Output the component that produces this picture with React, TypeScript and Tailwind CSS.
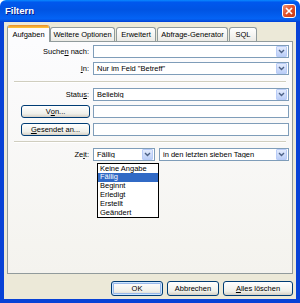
import React from "react";

const Arrow = () => (
  <div className="w-[11px] h-[11px] mr-px flex items-center justify-center rounded-[1px] border border-[#B9CCF7] bg-[linear-gradient(#E3EBFD,#BBCEF7)]">
    <svg width="7" height="5" viewBox="0 0 7 5">
      <path d="M1 1 L3.5 3.5 L6 1" stroke="#4D6185" strokeWidth="1.4" fill="none" />
    </svg>
  </div>
);

const Combo = ({ text, className = "" }: { text: string; className?: string }) => (
  <div className={`flex items-center h-[13px] border border-[#7F9DB9] bg-white ${className}`}>
    <span className="flex-1 pl-[3px] text-[7.5px] leading-none whitespace-nowrap overflow-hidden">{text}</span>
    <Arrow />
  </div>
);

const Input = () => <div className="flex-1 h-[13px] border border-[#7F9DB9] bg-white" />;

const Label = ({ children }: { children: React.ReactNode }) => (
  <div className="w-[85px] pr-[4px] text-right text-[7.5px] leading-none">{children}</div>
);

const Btn = ({ children, className = "" }: { children: React.ReactNode; className?: string }) => (
  <div
    className={`flex items-center justify-center border border-[#003C74] rounded-[3px] bg-[linear-gradient(#FFFFFF,#F0F0EA_70%,#D6D0C5)] text-[7.5px] leading-none ${className}`}
  >
    {children}
  </div>
);

const Sep = () => (
  <div className="ml-[6px] mr-[6px] h-[2px] border-t border-[#D0CEBF] border-b border-b-white" />
);

export default function App() {
  return (
    <div className="w-[300px] h-[303px] flex flex-col bg-white font-['Liberation_Sans',Arial,sans-serif] text-black select-none">
      {/* Title bar */}
      <div className="h-[22px] rounded-t-[6px] flex items-center pl-[5px] pr-[4px] bg-[linear-gradient(#0A8AFF_0%,#0058EE_10%,#0054E3_45%,#0463F5_85%,#0350E0_95%,#003DD7_100%)]">
        <span className="flex-1 text-white font-bold text-[9.5px] leading-none [text-shadow:1px_1px_#0A1E8A]">Filtern</span>
        <div className="w-[14px] h-[14px] rounded-[3px] border border-white bg-[linear-gradient(135deg,#F09270,#E0502A_50%,#C23A18)] flex items-center justify-center">
          <svg width="8" height="8" viewBox="0 0 8 8">
            <path d="M1 1 L7 7 M7 1 L1 7" stroke="white" strokeWidth="1.7" />
          </svg>
        </div>
      </div>

      {/* Body */}
      <div className="flex-1 flex flex-col bg-[#ECE9D8] border-x-[4px] border-b-[4px] border-[#0842D6] px-[3px] pt-[3px]">
        {/* Tabs */}
        <div className="flex items-end h-[16px] relative z-10">
          <div className="w-[43px] h-[17px] -mb-px flex flex-col bg-[#FCFCFE] border-x border-[#919B9C] rounded-t-[3px] overflow-hidden">
            <div className="h-[3px] bg-[linear-gradient(#E68B2C,#FFC73C)]" />
            <div className="flex-1 flex items-center justify-center text-[7.5px] leading-none">Aufgaben</div>
          </div>
          <div className="w-[65px] h-[14px] flex items-center justify-center border border-b-0 border-[#919B9C] rounded-t-[3px] bg-[linear-gradient(#FFFFFF,#ECEBE6)] text-[7.5px] leading-none">
            Weitere Optionen
          </div>
          <div className="w-[40px] h-[14px] ml-px flex items-center justify-center border border-b-0 border-[#919B9C] rounded-t-[3px] bg-[linear-gradient(#FFFFFF,#ECEBE6)] text-[7.5px] leading-none">
            Erweitert
          </div>
          <div className="w-[71px] h-[14px] ml-px flex items-center justify-center border border-b-0 border-[#919B9C] rounded-t-[3px] bg-[linear-gradient(#FFFFFF,#ECEBE6)] text-[7.5px] leading-none">
            Abfrage-Generator
          </div>
          <div className="w-[28px] h-[14px] ml-px flex items-center justify-center border border-b-0 border-[#919B9C] rounded-t-[3px] bg-[linear-gradient(#FFFFFF,#ECEBE6)] text-[7.5px] leading-none">
            SQL
          </div>
        </div>

        {/* Panel */}
        <div className="h-[233px] border border-[#919B9C] bg-[linear-gradient(#FCFCFE,#F4F3EE)] flex flex-col pt-[3px] pr-[3px] relative">
          <div className="flex items-center">
            <Label>
              Suche<span className="underline">n</span> nach:
            </Label>
            <Combo text="" className="flex-1" />
          </div>
          <div className="flex items-center mt-[4px]">
            <Label>
              <span className="underline">I</span>n:
            </Label>
            <Combo text={'Nur im Feld "Betreff"'} className="flex-1" />
          </div>
          <div className="mt-[6px] mb-[5px] -mr-[3px]">
            <Sep />
          </div>
          <div className="flex items-center">
            <Label>
              Statu<span className="underline">s</span>:
            </Label>
            <Combo text="Beliebig" className="flex-1" />
          </div>
          <div className="flex items-center mt-[4px]">
            <div className="w-[85px] pl-[13px] pr-[4px]">
              <Btn className="h-[13px] w-[69px]">
                V<span className="underline">o</span>n...
              </Btn>
            </div>
            <Input />
          </div>
          <div className="flex items-center mt-[5px]">
            <div className="w-[85px] pl-[13px] pr-[4px]">
              <Btn className="h-[13px] w-[69px]">
                <span className="underline">G</span>esendet an...
              </Btn>
            </div>
            <Input />
          </div>
          <div className="mt-[5px] mb-[5px] -mr-[3px]">
            <Sep />
          </div>
          <div className="flex items-center">
            <Label>
              Ze<span className="underline">i</span>t:
            </Label>
            <Combo text="Fällig" className="w-[62px]" />
            <Combo text="in den letzten sieben Tagen" className="flex-1 ml-[4px]" />
          </div>

          {/* Dropdown list */}
          <div className="absolute left-[89px] top-[121px] w-[62px] h-[55px] border border-black bg-white flex flex-col text-[7.5px] leading-none">
            <div className="h-[9px] flex items-center pl-[2px]">Keine Angabe</div>
            <div className="h-[9px] flex items-center pl-[2px] bg-[#316AC5] text-white">Fällig</div>
            <div className="h-[9px] flex items-center pl-[2px]">Beginnt</div>
            <div className="h-[9px] flex items-center pl-[2px]">Erledigt</div>
            <div className="h-[9px] flex items-center pl-[2px]">Erstellt</div>
            <div className="h-[9px] flex items-center pl-[2px]">Geändert</div>
          </div>
        </div>

        {/* Bottom buttons */}
        <div className="flex justify-end gap-[4px] mt-[7px]">
          <Btn className="w-[52px] h-[15px] shadow-[inset_0_0_0_1px_#CEE7FF,inset_0_0_0_2px_#98B8EA]">OK</Btn>
          <Btn className="w-[52px] h-[15px]">Abbrechen</Btn>
          <Btn className="w-[70px] h-[15px]">
            <span className="underline">A</span>lles löschen
          </Btn>
        </div>
      </div>
    </div>
  );
}
